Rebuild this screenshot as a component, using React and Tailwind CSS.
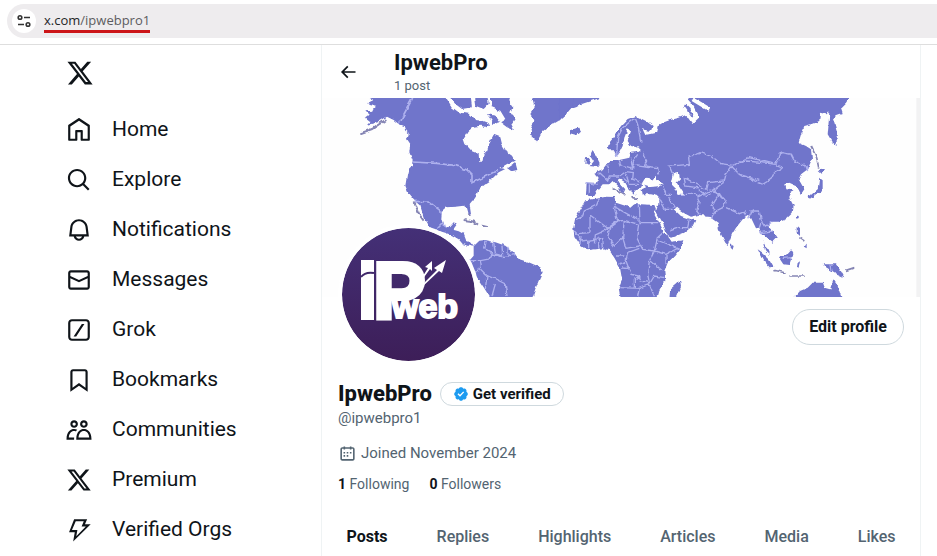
import React from 'react';

const X_LOGO =
  'M18.244 2.25h3.308l-7.227 8.26 8.502 11.24H16.17l-5.214-6.817L4.99 21.75H1.68l7.73-8.835L1.254 2.25H8.08l4.713 6.231zm-1.161 17.52h1.833L7.084 4.126H5.117z';

const NAV_ITEMS = [
  {
    label: 'Home',
    path: 'M21.591 7.146L12.52 1.157c-.316-.21-.724-.21-1.04 0l-9.071 5.99c-.26.173-.409.456-.409.757v13.183c0 .502.418.913.929.913h6.638c.511 0 .929-.41.929-.913v-7.075h3.008v7.075c0 .502.418.913.929.913h6.639c.51 0 .928-.41.928-.913V7.904c0-.301-.158-.584-.408-.758zM20 20l-4.5.01.011-7.097c0-.502-.418-.913-.928-.913H9.44c-.511 0-.929.41-.929.913L8.5 20H4V8.773l8.011-5.342L20 8.764z',
  },
  {
    label: 'Explore',
    path: 'M10.25 3.75c-3.59 0-6.5 2.91-6.5 6.5s2.91 6.5 6.5 6.5c1.795 0 3.419-.726 4.596-1.904 1.178-1.177 1.904-2.801 1.904-4.596 0-3.59-2.91-6.5-6.5-6.5zm-8.5 6.5c0-4.694 3.806-8.5 8.5-8.5s8.5 3.806 8.5 8.5c0 1.986-.682 3.815-1.824 5.262l4.781 4.781-1.414 1.414-4.781-4.781c-1.447 1.142-3.276 1.824-5.262 1.824-4.694 0-8.5-3.806-8.5-8.5z',
  },
  {
    label: 'Notifications',
    path: 'M19.993 9.042C19.48 5.017 16.054 2 11.996 2s-7.49 3.021-7.999 7.051L2.866 18H7.1c.463 2.282 2.481 4 4.9 4s4.437-1.718 4.9-4h4.236l-1.143-8.958zM12 20c-1.306 0-2.417-.835-2.829-2h5.658c-.412 1.165-1.523 2-2.829 2zm-6.866-4l.847-6.698C6.364 6.272 8.941 4 11.996 4s5.627 2.268 6.013 5.295L18.864 16H5.134z',
  },
  {
    label: 'Messages',
    path: 'M1.998 5.5c0-1.381 1.119-2.5 2.5-2.5h15c1.381 0 2.5 1.119 2.5 2.5v13c0 1.381-1.119 2.5-2.5 2.5h-15c-1.381 0-2.5-1.119-2.5-2.5v-13zm2.5-.5c-.276 0-.5.224-.5.5v2.764l8 3.638 8-3.636V5.5c0-.276-.224-.5-.5-.5h-15zm15.5 5.463l-8 3.636-8-3.638V18.5c0 .276.224.5.5.5h15c.276 0 .5-.224.5-.5v-8.037z',
  },
  {
    label: 'Grok',
    path: 'M5.5 2h13C20.43 2 22 3.57 22 5.5v13c0 1.93-1.57 3.5-3.5 3.5h-13C3.57 22 2 20.43 2 18.5v-13C2 3.57 3.57 2 5.5 2zm0 2C4.67 4 4 4.67 4 5.5v13c0 .83.67 1.5 1.5 1.5h13c.83 0 1.5-.67 1.5-1.5v-13c0-.83-.67-1.5-1.5-1.5zM7 18l7.6-11.5H17L9.4 18z',
  },
  {
    label: 'Bookmarks',
    path: 'M4 4.5C4 3.12 5.119 2 6.5 2h11C18.881 2 20 3.12 20 4.5v18.44l-8-5.71-8 5.71V4.5zM6.5 4c-.276 0-.5.22-.5.5v14.56l6-4.29 6 4.29V4.5c0-.28-.224-.5-.5-.5h-11z',
  },
  {
    label: 'Communities',
    path: 'M7.501 19.917L7.471 21H.472l.029-1.027c.184-6.618 3.736-8.977 7-8.977.963 0 1.95.212 2.87.672-.444.478-.851 1.03-1.212 1.656-.507-.204-1.054-.329-1.658-.329-2.767 0-4.57 2.223-4.938 6.004H7.56c-.023.302-.05.599-.059.918zm15.998.056L23.528 21H9.472l.029-1.027c.184-6.618 3.736-8.977 7-8.977s6.816 2.358 7 8.977zM21.437 19c-.367-3.781-2.17-6.004-4.938-6.004s-4.57 2.223-4.938 6.004h9.875zm-4.938-9c-.799 0-1.527-.279-2.116-.73-.836-.64-1.384-1.638-1.384-2.77 0-1.93 1.567-3.5 3.5-3.5s3.5 1.57 3.5 3.5c0 1.132-.548 2.13-1.384 2.77-.589.451-1.317.73-2.116.73zm-1.5-3.5c0 .827.673 1.5 1.5 1.5s1.5-.673 1.5-1.5-.673-1.5-1.5-1.5-1.5.673-1.5 1.5zM7.5 3C9.433 3 11 4.57 11 6.5S9.433 10 7.5 10 4 8.43 4 6.5 5.567 3 7.5 3zm0 2C6.673 5 6 5.673 6 6.5S6.673 8 7.5 8 9 7.327 9 6.5 8.327 5 7.5 5z',
  },
  { label: 'Premium', path: X_LOGO },
  {
    label: 'Verified Orgs',
    path: 'M7.5 2h12l-2 4.7h5.300L6.6 22.500l1.5-8.500H2.800zm1.5 2L5.500 12h5l-1 5.8L18.300 8.700h-3.900L16.400 4z',
  },
];

const TABS = ['Posts', 'Replies', 'Highlights', 'Articles', 'Media', 'Likes'];

function Icon({ path, className, viewBox = '0 0 24 24' }) {
  return (
    <svg viewBox={viewBox} className={className} fill="currentColor" fillRule="evenodd" aria-hidden="true">
      <path d={path} />
    </svg>
  );
}

function AddressBar() {
  return (
    <header className="border-b border-[#dedede] pt-1 pb-1.5 pl-[7px]">
      <div className="flex h-[34px] items-center gap-2 rounded-l-full bg-[#eeecee] pl-[5px]">
        <button aria-label="Site information" className="flex size-6 items-center justify-center rounded-full bg-white">
          <svg viewBox="0 0 14 14" className="size-3.5" fill="none" stroke="#333" strokeWidth="1.6">
            <circle cx="3" cy="3.500" r="1.800" />
            <path d="M7 3.500h6M1 10.500h6" />
            <circle cx="11" cy="10.500" r="1.800" />
          </svg>
        </button>
        <a
          href="#profile"
          className="border-b-3 border-[#cc1518] font-['Open_Sans','Noto_Sans',sans-serif] text-[13px] leading-5 text-[#5c5c5f]"
        >
          <span className="text-[#252527]">x.com</span>/ipwebpro1
        </a>
      </div>
    </header>
  );
}

function Sidebar() {
  return (
    <nav aria-label="Primary" className="w-[321px] shrink-0 pl-[66px]">
      <a href="#x" aria-label="X" className="mb-1 flex h-14 items-center">
        <Icon path={X_LOGO} className="size-7" />
      </a>
      {NAV_ITEMS.map((item) => (
        <a key={item.label} href={`#${item.label}`} className="flex h-[50px] items-center gap-5 text-[21px]">
          <Icon path={item.path} className="size-[26px]" />
          {item.label}
        </a>
      ))}
    </nav>
  );
}

function WorldMap() {
  return (
    <svg viewBox="0 0 1794 597" className="block h-auto w-full" role="img" aria-label="World map">
      <defs>
        <filter id="coast" x="0" y="0" width="100%" height="100%" filterUnits="userSpaceOnUse">
          <feTurbulence type="fractalNoise" baseFrequency="0.06" numOctaves="2" seed="4" result="noise" />
          <feDisplacementMap in="SourceGraphic" in2="noise" scale="12" xChannelSelector="R" yChannelSelector="G" />
          <feGaussianBlur stdDeviation="1.5" />
        </filter>
      </defs>
      <rect width="1794" height="597" fill="#fefefe" />
      <g filter="url(#coast)">
        {/* Americas and Greenland */}
        <g transform="translate(110 -12)">
          <g fill="#6f74cb">
            <path d="M10 0L45 18L25 28L55 35L40 50L20 52L30 62L20 70L35 82L28 92L60 84L85 68L105 78L120 90L135 95L140 110L150 120L145 135L155 150L152 175L162 200L160 215L150 225L145 245L140 275L150 300L165 318L185 335L195 370L205 385L213 400L240 410L262 417L280 424L300 436L312 450L332 456L345 458L332 442L322 438L315 420L300 412L283 407L297 388L285 385L272 400L255 395L248 375L250 350L262 340L290 338L315 335L325 342L330 360L337 358L333 330L345 315L355 300L360 285L375 272L392 262L405 250L420 235L440 225L425 222L445 210L468 200L460 185L445 175L430 150L425 130L405 122L395 140L390 155L385 170L375 180L372 200L362 205L360 180L340 172L320 150L315 135L330 110L345 98L365 95L385 100L395 90L370 80L350 78L330 60L300 55L280 40L268 20L255 0Z" />
            <path d="M395 0L455 0L448 20L462 40L455 55L468 75L458 90L466 108L445 100L425 85L440 75L425 50L400 40ZM345 0L385 0L390 30L375 45L350 35ZM265 0L335 0L340 40L310 45L290 30ZM385 60L410 65L425 85L405 90ZM445 222L470 205L476 228L458 232Z" />
            <path d="M518 0L760 0L640 40L618 65L600 80L575 95L552 112L536 142L520 132L515 100L528 80L515 60L528 40Z" />
            <path d="M345 457L362 440L380 438L410 445L440 455L465 475L480 495L510 505L545 520L552 535L540 560L530 585L518 620L400 620L375 580L355 550L335 525L332 500L345 485Z" />
          </g>
          <path d="M5 118L40 105L80 78M168 325L182 362L195 380M315 378L345 382L358 392M370 395L388 400M330 358L334 366" fill="none" stroke="#8585b4" strokeWidth="6" />
          <g fill="none" stroke="#aeb1ee" strokeWidth="4">
            <path d="M162 12L120 90M162 204L235 208L292 215L325 228L340 243L340 266L375 250L418 228M168 322L212 324L245 350L248 362M235 405L250 390L265 400" strokeWidth="5" />
            <path d="M380 440L375 462L398 475L392 495L365 500L368 520L350 535M405 445L410 480L432 486L430 455M448 458L448 485L470 482M398 480L430 488L450 486M365 525L385 545L410 555L440 570L445 606M385 545L380 585M335 500L365 500M400 606L410 570" />
          </g>
        </g>

        {/* Africa, Europe, Asia and the Pacific */}
        <g transform="translate(712 -11)">
          <g fill="#6f74cb">
            <path d="M0 0L45 0L40 30L15 60L0 80Z" />
            <path d="M32 108L55 100L62 112L48 124L32 120ZM98 170L108 180L122 208L115 217L92 215L104 200L94 185ZM80 192L92 190L90 210L78 212Z" />
            <path d="M78 318L100 315L140 307L165 308L170 325L200 335L212 341L225 330L245 330L285 332L290 345L282 352L300 385L312 410L330 432L337 442L372 438L365 460L345 485L325 505L315 530L318 560L300 590L292 620L185 620L178 580L188 555L182 520L165 490L150 468L130 462L85 468L65 455L45 425L42 400L48 370L60 350Z" />
            <path d="M362 558L365 575L352 604L345 620L330 620L332 585L350 570Z" />
            <path d="M145 165L150 145L170 120L185 95L205 74L230 65L260 80L280 95L275 110L250 105L258 122L290 115L295 95L310 85L330 78L360 70L385 60L370 42L395 0L875 0L860 25L845 40L850 55L830 62L820 70L832 110L832 155L820 145L805 120L808 85L810 50L802 60L782 55L780 80L755 90L735 95L725 120L718 145L740 155L755 165L758 195L745 225L725 240L718 255L735 285L725 300L712 275L690 265L675 270L678 282L702 285L690 310L703 335L700 355L680 375L655 385L635 385L625 395L645 415L655 430L640 445L620 430L605 415L600 400L590 402L575 370L565 365L550 375L530 400L518 420L505 452L498 445L480 410L475 385L460 375L455 365L420 362L395 367L375 357L365 350L350 337L343 345L365 365L385 372L408 378L400 395L375 415L335 430L325 425L310 385L290 350L297 330L297 305L275 300L250 300L247 285L262 278L250 268L245 280L225 285L228 302L215 290L205 280L195 262L178 252L175 262L195 285L188 300L178 280L160 260L150 270L130 270L118 285L105 305L85 305L80 300L82 265L112 265L118 250L105 235L130 225L145 205L165 200L190 195L210 190L215 175L240 172L240 160L215 155L205 140L215 110L205 105L195 130L190 155L180 175L172 185L162 165Z" />
            {/* islands */}
            <path d="M783 220L797 228L787 238L778 230ZM780 250L790 258L790 290L770 300L750 315L748 308L775 285ZM595 465L610 475L630 495L645 520L632 520L610 495ZM665 485L680 485L698 465L702 480L692 512L672 510L662 495ZM712 505L722 498L718 520L710 518ZM610 440L622 462L632 485L618 472ZM790 510L830 510L848 535L855 552L830 540L800 522ZM690 625L722 590L745 580L760 565L790 565L795 580L812 585L822 555L835 575L850 620ZM712 395L722 405L722 425L712 415ZM730 455L742 448L742 462ZM514 450L523 455L520 466L514 460ZM710 360L716 368L710 378Z" />
          </g>
          <path d="M755 155L772 190L778 220M645 528L680 536M690 545L735 545M720 430L735 440M860 528L885 520M160 280L195 302M216 310L235 312" fill="none" stroke="#8585b4" strokeWidth="5" />
          {/* inland seas */}
          <path d="M246 270L258 250L272 252L278 256L290 244L290 256L312 268L300 276L270 278ZM340 240L358 235L362 255L352 265L368 290L375 300L355 302L345 280L335 262Z" fill="#fefefe" />
          <path d="M318 0L322 45M372 40L400 80L412 68L398 40L378 20M400 15L450 45" fill="none" stroke="#fefefe" strokeWidth="12" />
          <g fill="none" stroke="#aeb1ee" strokeWidth="4">
            <path d="M172 185L175 130L190 100L225 72M228 72L235 90L245 145M82 265L115 270M90 270L90 298M118 235L145 260L150 245L180 245L200 232L222 235L220 255L240 262M145 210L150 235M180 198L185 215L220 225L215 190M220 225L222 200L235 180M222 210L255 215L262 200L250 175M255 215L295 220L298 240M200 240L210 270L240 270M190 250L205 262" />
            <path d="M340 240L330 215L390 210L388 190L425 175L460 188L485 208L520 213L550 200L570 190L640 208M520 213L500 240L495 260L445 265L440 285L375 250L378 275L412 280L440 305L460 290L495 262M516 215L540 240L600 258M445 265L470 262M375 300L410 300L420 320L412 350L420 360M412 310L450 290L480 298L455 335L470 350L455 370M480 298L500 325L490 340L470 350M500 340L540 358L560 350L555 370M465 290L500 322M310 275L320 300L335 300M325 305L345 340M300 310L318 345L340 345M375 300L362 300M330 410L360 400L385 400L390 375" />
            <path d="M540 205L565 200L650 210L660 180L670 175L695 180L705 200L740 215L745 230M540 240L575 255L610 270L635 255L645 235L670 220L650 212M570 350L580 350L600 350L605 375L618 395L640 382M580 345L565 375M605 385L600 400M600 415L640 410M815 510L818 530M670 492L698 490" />
            <path d="M120 312L112 332L75 350L70 365L50 375M92 362L92 415L55 418M92 362L145 402L130 412L108 422L105 450M165 340L175 380L145 402M165 325L170 340L238 378M240 330L242 385L300 385M195 378L190 430L165 455L145 430L150 402L180 380L195 378L238 390L232 430L250 465L285 470M190 430L200 462L240 455M45 410L65 430L62 450M65 440L108 435L130 430L132 460M118 430L118 462M88 440L88 465M240 462L205 475L200 500L180 510M200 500L215 540L240 545L245 560L270 565L265 540L270 500L285 470L295 430L310 415M300 440L355 462L320 480L285 470M275 500L310 530M320 480L320 510M180 580L240 582L270 570L285 545L315 550M240 582L235 606M225 582L225 555L240 545M270 570L285 606M170 485L195 485M188 518L212 520" />
          </g>
        </g>
      </g>
      <rect x="1783" width="11" height="597" fill="#f2f2f3" />
    </svg>
  );
}

function Avatar() {
  return (
    <svg
      viewBox="0 0 133 133"
      className="-mt-[73px] size-[141px] rounded-full border-4 border-white"
      role="img"
      aria-label="IPweb logo"
    >
      <defs>
        <linearGradient id="avatar" x1="0" y1="0" x2="0" y2="1">
          <stop offset="0" stopColor="#443077" />
          <stop offset="1" stopColor="#3d1e58" />
        </linearGradient>
      </defs>
      <circle cx="66.500" cy="66.500" r="66.500" fill="url(#avatar)" />
      <path d="M19 32h13v60H19z" fill="#fff" />
      <path d="M19 49c3-4 7-5 13-4" fill="none" stroke="#40286a" strokeWidth="2" />
      <text
        y="90"
        fill="#fff"
        stroke="#fff"
        fontWeight="bold"
        className="font-['Liberation_Sans_Narrow','Liberation_Sans',sans-serif]"
      >
        <tspan x="31" fontSize="79" strokeWidth="4">P</tspan>
        <tspan x="50" fontSize="34" strokeWidth="2">web</tspan>
      </text>
      <g fill="#fff">
        <path d="M74 59L86 40l-3-1 7-6v10l-2-2-13 18zM77 60L95 42l-3-2 12-8-4 13-3-2-19 18z" />
      </g>
    </svg>
  );
}

function Profile() {
  return (
    <main className="min-w-0 flex-1 border-x border-[#eff3f4]">
      <div className="flex h-[53px] items-center gap-9 pl-4">
        <button aria-label="Back" className="flex size-5 items-center justify-center">
          <Icon
            path="M7.414 13l5.043 5.040-1.414 1.420L3.586 12l7.457-7.460 1.414 1.420L7.414 11H21v2H7.414z"
            className="size-5"
          />
        </button>
        <div className="pt-1">
          <h2 className="text-[22px] leading-6 font-bold">IpwebPro</h2>
          <p className="text-[13px] leading-[22px] text-[#536471]">1 post</p>
        </div>
      </div>

      <WorldMap />

      <div className="flex items-start justify-between px-4">
        <Avatar />
        <button className="mt-3 h-9 rounded-full border border-[#cfd9de] px-4 text-base font-bold">Edit profile</button>
      </div>

      <section className="px-4 pt-[15px]">
        <div className="flex items-center gap-2">
          <h1 className="text-[22px] leading-7 font-extrabold">IpwebPro</h1>
          <button className="flex h-6 items-center gap-1 rounded-full border border-[#cfd9de] px-3 text-[15px] font-bold">
            <Icon
              viewBox="0 0 22 22"
              className="size-4 text-[#1d9bf0]"
              path="M20.396 11c-.018-.646-.215-1.275-.57-1.816-.354-.54-.852-.972-1.438-1.246.223-.607.27-1.264.14-1.897-.131-.634-.437-1.218-.882-1.687-.47-.445-1.053-.75-1.687-.882-.633-.13-1.29-.083-1.897.14-.273-.587-.704-1.086-1.245-1.44S11.647 1.62 11 1.604c-.646.017-1.273.213-1.813.568s-.969.854-1.24 1.44c-.608-.223-1.267-.272-1.902-.14-.635.13-1.22.436-1.69.882-.445.47-.749 1.055-.878 1.688-.13.633-.08 1.29.144 1.896-.587.274-1.087.705-1.443 1.245-.356.54-.555 1.17-.574 1.817.02.647.218 1.276.574 1.817.356.54.856.972 1.443 1.245-.224.606-.274 1.263-.144 1.896.13.634.433 1.218.877 1.688.47.443 1.054.747 1.687.878.633.132 1.29.084 1.897-.136.274.586.705 1.084 1.246 1.439.54.354 1.17.551 1.816.569.647-.016 1.276-.213 1.817-.567s.972-.854 1.245-1.44c.604.239 1.266.296 1.903.164.636-.132 1.22-.447 1.68-.907.46-.46.776-1.044.908-1.681s.075-1.299-.165-1.903c.586-.274 1.084-.705 1.439-1.246.354-.54.551-1.17.569-1.816zM9.662 14.85l-3.429-3.428 1.293-1.302 2.072 2.072 4.4-4.794 1.347 1.246z"
            />
            Get verified
          </button>
        </div>
        <p className="text-[15px] leading-5 text-[#536471]">@ipwebpro1</p>
        <p className="mt-[15px] flex items-center gap-1 text-[15px] leading-5 text-[#536471]">
          <Icon
            className="size-[19px]"
            path="M7 4V3h2v1h6V3h2v1h1.500C19.890 4 21 5.120 21 6.500v12c0 1.380-1.110 2.500-2.500 2.500h-13C4.120 21 3 19.880 3 18.500v-12C3 5.120 4.120 4 5.500 4H7zm0 2H5.500c-.27 0-.5.22-.5.5v12c0 .28.23.5.5.5h13c.28 0 .5-.22.5-.5v-12c0-.28-.22-.5-.5-.5H17v1h-2V6H9v1H7V6zm0 6h2v-2H7v2zm0 4h2v-2H7v2zm4-4h2v-2h-2v2zm0 4h2v-2h-2v2zm4-4h2v-2h-2v2z"
          />
          Joined November 2024
        </p>
        <div className="mt-[11px] flex gap-5 text-sm text-[#536471]">
          <a href="#following">
            <span className="font-bold text-[#0f1419]">1</span> Following
          </a>
          <a href="#followers">
            <span className="font-bold text-[#0f1419]">0</span> Followers
          </a>
        </div>
      </section>

      <div role="tablist" className="mt-4 flex h-[53px] text-base text-[#536471]">
        {TABS.map((tab, i) => (
          <button
            key={tab}
            role="tab"
            aria-selected={i === 0}
            className="flex-auto px-4 font-medium aria-selected:font-bold aria-selected:text-[#0f1419]"
          >
            {tab}
          </button>
        ))}
      </div>
    </main>
  );
}

export default function App() {
  return (
    <div className="h-screen overflow-hidden bg-white font-[Roboto,'Noto_Sans',sans-serif] text-[#0f1419]">
      <AddressBar />
      <div className="flex pr-4">
        <Sidebar />
        <Profile />
      </div>
    </div>
  );
}
